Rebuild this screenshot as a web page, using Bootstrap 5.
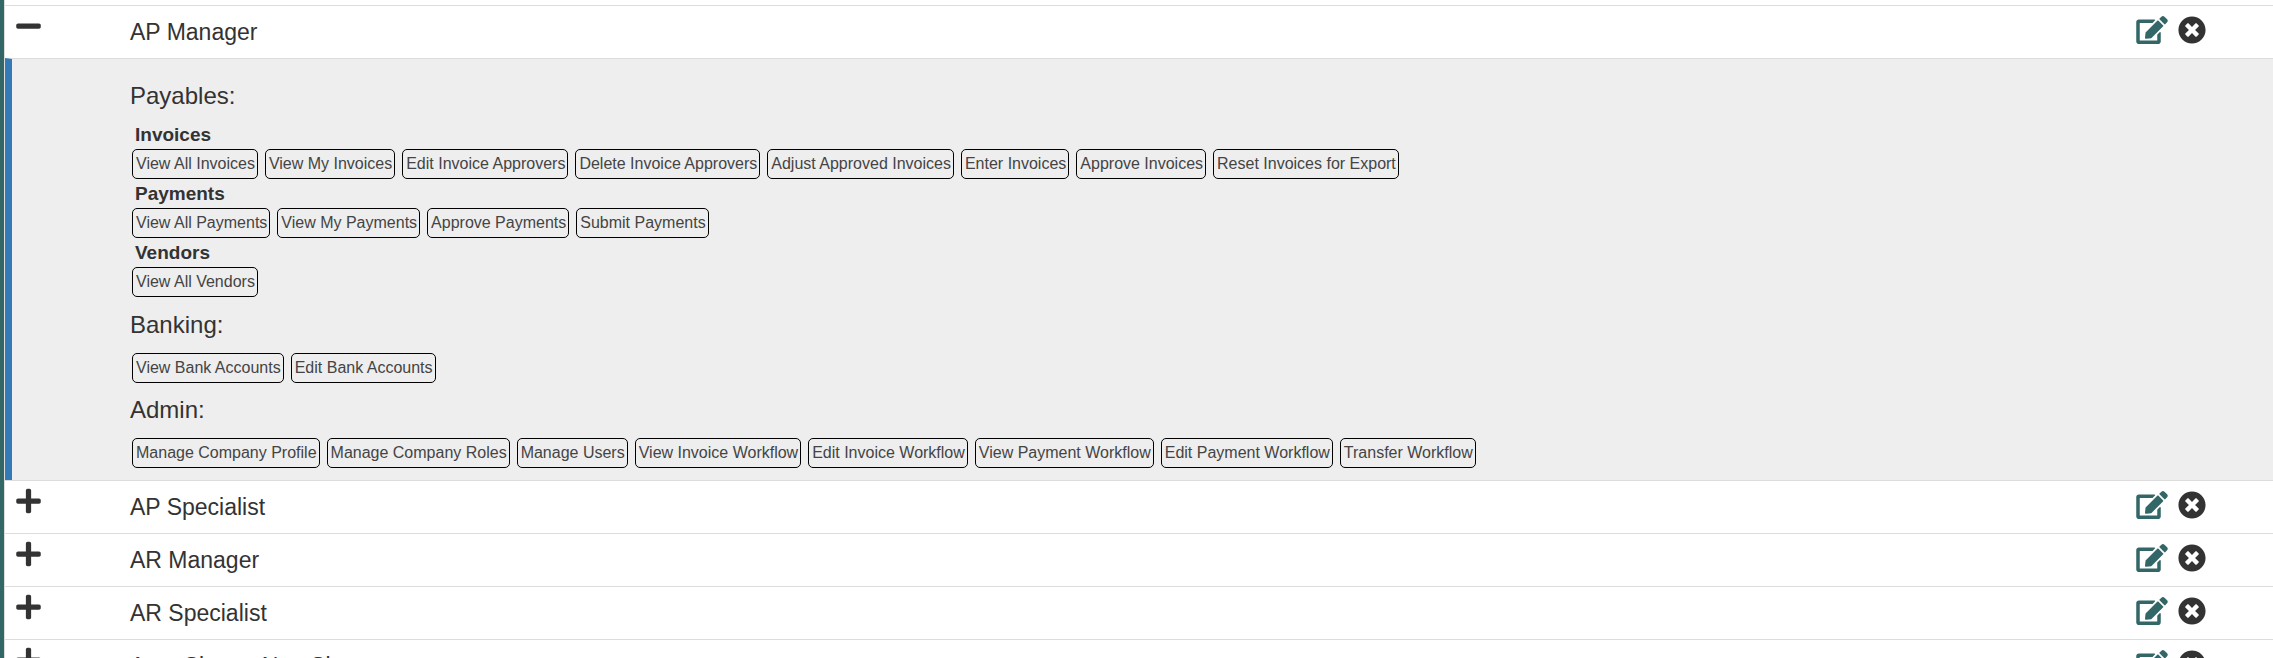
<!DOCTYPE html>
<html lang="en">
<head>
<meta charset="utf-8">
<meta name="viewport" content="width=device-width, initial-scale=1">
<title>Roles</title>
<link href="https://cdn.jsdelivr.net/npm/bootstrap@5.3.0/dist/css/bootstrap.min.css" rel="stylesheet">
<style>
  body { font-family: "Liberation Sans", Arial, sans-serif; color: #333; background: #fff; }
  .roles { border-left: 4px solid #336666; height: 100vh; overflow: hidden; }
  .roles-inner { border-left: 1px solid #ddd; padding-top: 5px; }
  .role-row { border-top: 1px solid #ddd; height: 53px; }
  .role-toggle { width: 125px; padding: 6px 0 0 11px; line-height: 1; }
  .role-toggle button, .role-actions button { color: #333; border: 0; background: none; padding: 0; line-height: 1; }
  .role-name { font-size: 23px; line-height: 32px; padding-top: 10px; }
  .role-actions { padding: 10px 67px 0 0; gap: 10px; }
  .role-actions a { color: #336666; line-height: 1; }
  .role-detail { border-top: 1px solid #ddd; border-left: 7px solid #337ab7; background: #eee; padding: 20px 8px 12px 118px; }
  .role-detail h2 { font-size: 24px; line-height: 34px; font-weight: 400; margin: 0; }
  .role-detail h3 { font-size: 19px; line-height: 29px; font-weight: 700; margin: 0; padding-left: 5px; }
  .perm-list { list-style: none; margin: 0; padding: 0 2px; gap: 7px; }
  .perm-list li { border: 1px solid #000; border-radius: 5px; color: #444; font-size: 16px; line-height: 28px; padding: 0 2px 0 3px; }
  .perm-section + .perm-section { margin-top: 10px; }
  .perm-section:first-child { padding-bottom: 1px; }
  .perm-section > h2 + .perm-list { margin-top: 11px; }
  .perm-section > h2 + h3 { margin-top: 7px; }
  svg { display: block; fill: currentColor; }
</style>
<script src="https://cdn.jsdelivr.net/npm/bootstrap@5.3.0/dist/js/bootstrap.bundle.min.js"></script>
</head>
<body>
<svg class="d-none" aria-hidden="true">
  <symbol id="i-minus" viewBox="0 0 448 512"><path d="M416 208H32c-17.670 0-32 14.330-32 32v32c0 17.670 14.330 32 32 32h384c17.670 0 32-14.330 32-32v-32c0-17.670-14.330-32-32-32z"/></symbol>
  <symbol id="i-plus" viewBox="0 0 448 512"><path d="M416 208H272V64c0-17.670-14.330-32-32-32h-32c-17.670 0-32 14.330-32 32v144H32c-17.670 0-32 14.330-32 32v32c0 17.670 14.330 32 32 32h144v144c0 17.670 14.330 32 32 32h32c17.670 0 32-14.330 32-32V304h144c17.670 0 32-14.330 32-32v-32c0-17.670-14.330-32-32-32z"/></symbol>
  <symbol id="i-edit" viewBox="0 0 576 512"><path d="M402.600 83.200l90.200 90.200c3.800 3.800 3.800 10 0 13.800L274.400 405.600l-92.800 10.300c-12.400 1.400-22.900-9.100-21.500-21.500l10.300-92.800L388.800 83.200c3.800-3.800 10-3.800 13.800 0zm162-22.900l-48.800-48.800c-15.200-15.200-39.900-15.200-55.200 0l-35.400 35.400c-3.800 3.800-3.800 10 0 13.800l90.200 90.200c3.800 3.800 10 3.800 13.800 0l35.400-35.400c15.200-15.300 15.200-40 0-55.200zM384 346.200V448H64V128h229.800c3.200 0 6.200-1.300 8.500-3.500l40-40c7.600-7.600 2.200-20.500-8.500-20.500H48C21.500 64 0 85.500 0 112v352c0 26.500 21.500 48 48 48h352c26.500 0 48-21.500 48-48V306.200c0-10.700-12.900-16-20.500-8.500l-40 40c-2.200 2.300-3.500 5.300-3.500 8.500z"/></symbol>
  <symbol id="i-remove" viewBox="0 0 512 512"><path d="M256 8C119 8 8 119 8 256s111 248 248 248 248-111 248-248S393 8 256 8zm121.600 313.100c4.700 4.700 4.700 12.300 0 17L338 377.600c-4.700 4.700-12.300 4.700-17 0L256 312l-65.100 65.600c-4.700 4.700-12.300 4.700-17 0L134.400 338c-4.700-4.700-4.700-12.300 0-17l65.600-65-65.600-65.100c-4.700-4.700-4.700-12.300 0-17l39.600-39.600c4.700-4.700 12.300-4.700 17 0l65 65.700 65.100-65.600c4.700-4.700 12.300-4.700 17 0l39.600 39.600c4.700 4.700 4.700 12.300 0 17L312 256l65.600 65.100z"/></symbol>
</svg>
<main class="roles">
  <div class="roles-inner">
    <div class="role-row d-flex align-items-start">
      <div class="role-toggle flex-shrink-0"><button type="button" aria-label="Collapse AP Manager" aria-expanded="true"><svg width="25" height="28"><use href="#i-minus"/></svg></button></div>
      <div class="role-name flex-grow-1">AP Manager</div>
      <div class="role-actions d-flex"><a href="#" aria-label="Edit AP Manager"><svg width="32" height="28"><use href="#i-edit"/></svg></a><button type="button" aria-label="Remove AP Manager"><svg width="28" height="28"><use href="#i-remove"/></svg></button></div>
    </div>
    <div class="role-detail">
      <section class="perm-section">
        <h2>Payables:</h2>
        <h3>Invoices</h3>
        <ul class="perm-list d-flex flex-wrap"><li>View All Invoices</li><li>View My Invoices</li><li>Edit Invoice Approvers</li><li>Delete Invoice Approvers</li><li>Adjust Approved Invoices</li><li>Enter Invoices</li><li>Approve Invoices</li><li>Reset Invoices for Export</li></ul>
        <h3>Payments</h3>
        <ul class="perm-list d-flex flex-wrap"><li>View All Payments</li><li>View My Payments</li><li>Approve Payments</li><li>Submit Payments</li></ul>
        <h3>Vendors</h3>
        <ul class="perm-list d-flex flex-wrap"><li>View All Vendors</li></ul>
      </section>
      <section class="perm-section">
        <h2>Banking:</h2>
        <ul class="perm-list d-flex flex-wrap"><li>View Bank Accounts</li><li>Edit Bank Accounts</li></ul>
      </section>
      <section class="perm-section">
        <h2>Admin:</h2>
        <ul class="perm-list d-flex flex-wrap"><li>Manage Company Profile</li><li>Manage Company Roles</li><li>Manage Users</li><li>View Invoice Workflow</li><li>Edit Invoice Workflow</li><li>View Payment Workflow</li><li>Edit Payment Workflow</li><li>Transfer Workflow</li></ul>
      </section>
    </div>
    <div class="role-row d-flex align-items-start">
      <div class="role-toggle flex-shrink-0"><button type="button" aria-label="Expand AP Specialist"><svg width="25" height="28"><use href="#i-plus"/></svg></button></div>
      <div class="role-name flex-grow-1">AP Specialist</div>
      <div class="role-actions d-flex"><a href="#" aria-label="Edit AP Specialist"><svg width="32" height="28"><use href="#i-edit"/></svg></a><button type="button" aria-label="Remove AP Specialist"><svg width="28" height="28"><use href="#i-remove"/></svg></button></div>
    </div>
    <div class="role-row d-flex align-items-start">
      <div class="role-toggle flex-shrink-0"><button type="button" aria-label="Expand AR Manager"><svg width="25" height="28"><use href="#i-plus"/></svg></button></div>
      <div class="role-name flex-grow-1">AR Manager</div>
      <div class="role-actions d-flex"><a href="#" aria-label="Edit AR Manager"><svg width="32" height="28"><use href="#i-edit"/></svg></a><button type="button" aria-label="Remove AR Manager"><svg width="28" height="28"><use href="#i-remove"/></svg></button></div>
    </div>
    <div class="role-row d-flex align-items-start">
      <div class="role-toggle flex-shrink-0"><button type="button" aria-label="Expand AR Specialist"><svg width="25" height="28"><use href="#i-plus"/></svg></button></div>
      <div class="role-name flex-grow-1">AR Specialist</div>
      <div class="role-actions d-flex"><a href="#" aria-label="Edit AR Specialist"><svg width="32" height="28"><use href="#i-edit"/></svg></a><button type="button" aria-label="Remove AR Specialist"><svg width="28" height="28"><use href="#i-remove"/></svg></button></div>
    </div>
    <div class="role-row d-flex align-items-start">
      <div class="role-toggle flex-shrink-0"><button type="button" aria-label="Expand Auto Signer, Non Signer"><svg width="25" height="28"><use href="#i-plus"/></svg></button></div>
      <div class="role-name flex-grow-1">Auto Signer, Non Signer</div>
      <div class="role-actions d-flex"><a href="#" aria-label="Edit Auto Signer, Non Signer"><svg width="32" height="28"><use href="#i-edit"/></svg></a><button type="button" aria-label="Remove Auto Signer, Non Signer"><svg width="28" height="28"><use href="#i-remove"/></svg></button></div>
    </div>
  </div>
</main>
</body>
</html>
